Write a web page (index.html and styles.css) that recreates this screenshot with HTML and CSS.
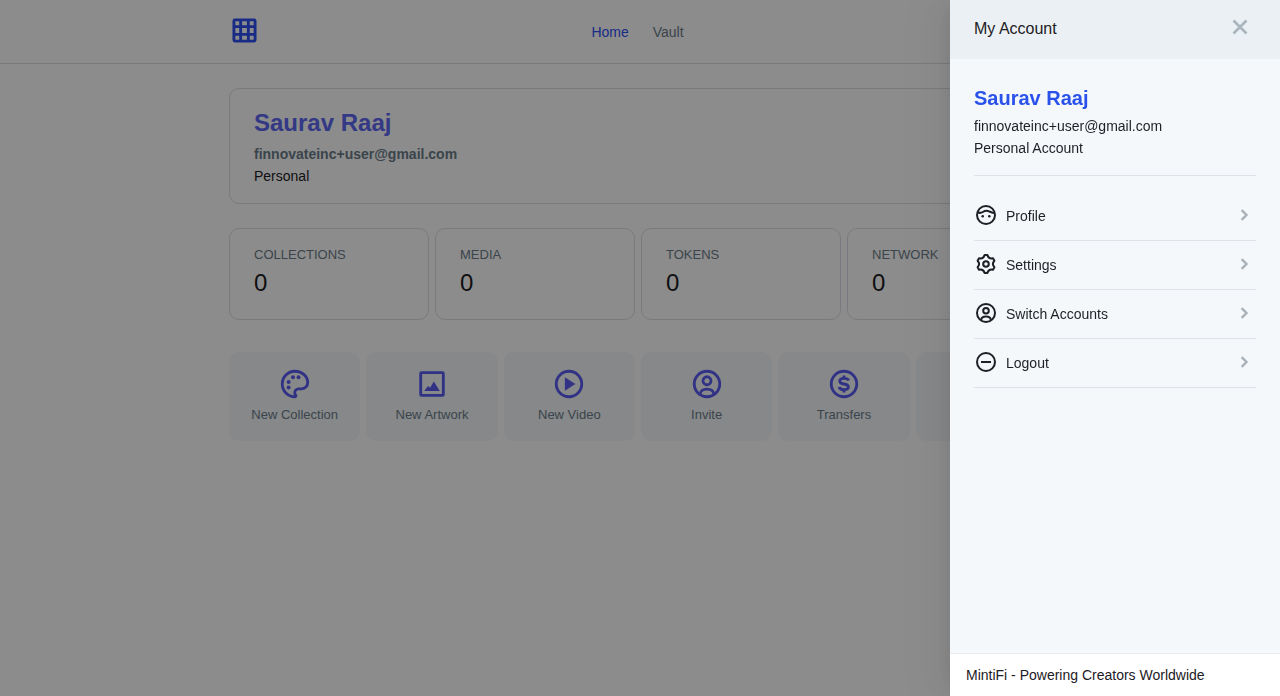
FILE: index.html
```html
<!DOCTYPE html>
<html lang="en">
<head>
<meta charset="utf-8">
<title>MintiFi</title>
<meta name="viewport" content="width=device-width, initial-scale=1">
<link rel="stylesheet" href="styles.css">
</head>
<body>
<svg class="defs" aria-hidden="true">
  <symbol id="user" viewBox="0 0 24 24">
    <g fill="none" stroke="currentColor" stroke-width="2"><circle cx="12" cy="12" r="9"/><circle cx="12" cy="9.700" r="2.800"/><path d="M7.200 19.200c0-2.300 2.100-3.600 4.800-3.600s4.800 1.300 4.800 3.600"/></g>
  </symbol>
  <symbol id="chevron" viewBox="0 0 24 24">
    <path d="M9.200 6.200l5.800 5.800-5.800 5.800" fill="none" stroke="currentColor" stroke-width="2.800"/>
  </symbol>
</svg>

<div class="page">
  <header class="topbar">
    <div class="container topbar-inner">
      <a href="#" class="logo" aria-label="MintiFi home">
        <svg viewBox="0 0 26 26"><path fill="currentColor" fill-rule="evenodd" d="M3 .5h20A2.500 2.500 0 0 1 25.500 3v20a2.500 2.500 0 0 1-2.500 2.500H3A2.500 2.500 0 0 1 .5 23V3A2.500 2.500 0 0 1 3 .5zM3.500 3.500v4h4v-4zM10.500 3.500v4h5v-4zM18.500 3.500v4h4v-4zM3.500 10.500v5h4v-5zM10.500 10.500v5h5v-5zM18.500 10.500v5h4v-5zM3.500 18.500v4h4v-4zM10.500 18.500v4h5v-4zM18.500 18.500v4h4v-4z"/></svg>
      </a>
      <nav class="nav"><a href="#" class="active">Home</a><a href="#">Vault</a></nav>
    </div>
  </header>

  <main class="container content">
    <section class="card profile">
      <h1>Saurav Raaj</h1>
      <p class="email">finnovateinc+user@gmail.com</p>
      <p>Personal</p>
    </section>

    <section class="stats">
      <div class="card stat"><h2>COLLECTIONS</h2><p>0</p></div>
      <div class="card stat"><h2>MEDIA</h2><p>0</p></div>
      <div class="card stat"><h2>TOKENS</h2><p>0</p></div>
      <div class="card stat"><h2>NETWORK</h2><p>0</p></div>
    </section>

    <section class="tiles">
      <button class="tile" type="button">
        <svg viewBox="0 0 24 24" fill="currentColor"><path d="M12 2c5.522 0 10 3.978 10 8.889a5.558 5.558 0 0 1-5.556 5.555h-1.966c-.922 0-1.667.745-1.667 1.667 0 .422.167.811.422 1.100.267.300.434.689.434 1.122C13.667 21.256 12.900 22 12 22 6.478 22 2 17.522 2 12S6.478 2 12 2zm-1.189 16.111a3.664 3.664 0 0 1 3.667-3.667h1.966A3.558 3.558 0 0 0 20 10.890C20 7.139 16.468 4 12 4a8 8 0 0 0-.676 15.972 3.648 3.648 0 0 1-.513-1.860z"/><circle cx="10.600" cy="7.300" r="1.400"/><circle cx="14.500" cy="7.300" r="1.400"/><circle cx="7.500" cy="10.600" r="1.400"/><circle cx="7.500" cy="14.400" r="1.400"/></svg>
        <span>New Collection</span>
      </button>
      <button class="tile" type="button">
        <svg viewBox="0 0 24 24" fill="currentColor"><rect x="4" y="4" width="16" height="16" rx="0.600" fill="none" stroke="currentColor" stroke-width="2"/><path d="M6.500 17l2.700-3.600 1.400 1.300 2.700-4.500L17.500 17z"/></svg>
        <span>New Artwork</span>
      </button>
      <button class="tile" type="button">
        <svg viewBox="0 0 24 24" fill="currentColor"><circle cx="12" cy="12" r="9" fill="none" stroke="currentColor" stroke-width="2"/><path d="M9.100 7.200v9.600l7.400-4.800z"/></svg>
        <span>New Video</span>
      </button>
      <button class="tile" type="button">
        <svg><use href="#user"/></svg>
        <span>Invite</span>
      </button>
      <button class="tile" type="button">
        <svg viewBox="0 0 24 24" fill="none" stroke="currentColor" stroke-width="2"><circle cx="12" cy="12" r="9"/><path d="M15.300 9.600C14.900 8.500 13.700 8 12 8c-1.900 0-3 .8-3 2 0 1.300 1.200 1.700 3 2s3.100.8 3.100 2.100c0 1.200-1.200 1.900-3.100 1.900-1.800 0-3.100-.6-3.500-1.900M12 6v2.200M12 15.800V18"/></svg>
        <span>Transfers</span>
      </button>
      <button class="tile" type="button" aria-label="More"></button>
    </section>
  </main>
</div>

<div class="backdrop"></div>

<aside class="drawer" role="dialog" aria-label="My Account">
  <header class="drawer-head">
    <h2>My Account</h2>
    <button class="close" type="button" aria-label="Close">
      <svg viewBox="0 0 16 16"><path d="M1.500 1.500l13 13M14.500 1.500l-13 13" fill="none" stroke="currentColor" stroke-width="2.600"/></svg>
    </button>
  </header>
  <div class="drawer-body">
    <div class="account">
      <h3>Saurav Raaj</h3>
      <p>finnovateinc+user@gmail.com</p>
      <p>Personal Account</p>
    </div>
    <ul class="menu">
      <li><a href="#">
        <svg viewBox="0 0 24 24" fill="currentColor"><g fill="none" stroke="currentColor" stroke-width="2"><circle cx="12" cy="12" r="9"/><path d="M3.200 8.900c1.800 1.300 3.800 1.200 5.600.1 1.900-1.200 4.100-1.500 6.200-.7 1.700.7 3.300 1.700 5.900 1.800"/></g><circle cx="8.700" cy="13.300" r="1.300"/><circle cx="15.300" cy="13.300" r="1.300"/></svg>
        <span>Profile</span><svg class="chevron"><use href="#chevron"/></svg></a></li>
      <li><a href="#">
        <svg viewBox="0 0 24 24" fill="none" stroke="currentColor" stroke-width="2" stroke-linejoin="round"><path d="M10.600 3.100h2.800Q14.700 7.300 19 6.300l1.400 2.500Q17.400 12 20.400 15.200L19 17.700Q14.700 16.700 13.400 20.900h-2.800Q9.300 16.700 5 17.700l-1.400-2.500Q6.600 12 3.600 8.800L5 6.300Q9.300 7.300 10.600 3.100z"/><circle cx="12" cy="12" r="2.800"/></svg>
        <span>Settings</span><svg class="chevron"><use href="#chevron"/></svg></a></li>
      <li><a href="#">
        <svg><use href="#user"/></svg>
        <span>Switch Accounts</span><svg class="chevron"><use href="#chevron"/></svg></a></li>
      <li><a href="#">
        <svg viewBox="0 0 24 24" fill="none" stroke="currentColor" stroke-width="2"><circle cx="12" cy="12" r="9"/><path d="M7 12h10"/></svg>
        <span>Logout</span><svg class="chevron"><use href="#chevron"/></svg></a></li>
    </ul>
  </div>
  <footer class="drawer-foot">MintiFi - Powering Creators Worldwide</footer>
</aside>
</body>
</html>
```
FILE: styles.css
```css
* {
  box-sizing: border-box;
}

body {
  margin: 0;
  background: #fff;
  color: #1d2024;
  font: 14px/22px "Liberation Sans", Helvetica, Arial, sans-serif;
}

h1, h2, h3, p, ul {
  margin: 0;
  padding: 0;
}

a {
  color: inherit;
  text-decoration: none;
}

button {
  border: 0;
  padding: 0;
  font: inherit;
  cursor: pointer;
}

svg {
  display: block;
}

.defs {
  display: none;
}

.page {
  min-height: 100vh;
}

.topbar {
  border-bottom: 1px solid #dcdfe3;
  padding-right: 5px;
}

.container {
  width: 100%;
  max-width: 818px;
  margin: 0 auto;
}

.topbar-inner {
  display: grid;
  grid-template-columns: 1fr auto 1fr;
  align-items: center;
  height: 63px;
}

.logo {
  color: #2d50f5;
  padding: 0 3px 2px;
}

.logo svg {
  width: 25px;
  height: 25px;
}

.nav {
  display: flex;
  gap: 24px;
  color: #6c7d8a;
}

.nav .active {
  color: #2d50f5;
}

.page .content {
  max-width: 822px;
  padding: 24px 4px 24px 0;
}

.card {
  border: 1px solid #dcdfe3;
  border-radius: 10px;
}

.profile {
  padding: 16px 24px;
}

.profile h1 {
  margin-bottom: 2px;
  color: #6068f5;
  font-size: 24px;
  line-height: 36px;
}

.email {
  color: #6c7d8a;
  font-weight: bold;
}

.stats {
  display: grid;
  grid-template-columns: repeat(4, 1fr);
  gap: 6px;
  margin-top: 24px;
}

.stat {
  padding: 15px 24px 19px;
}

.stat h2 {
  color: #6c7d8a;
  font-size: 13px;
  font-weight: normal;
  line-height: 22px;
}

.stat p {
  font-size: 24px;
  line-height: 34px;
}

.tiles {
  display: grid;
  grid-template-columns: repeat(6, 1fr);
  gap: 6px;
  margin-top: 32px;
}

.tile {
  display: flex;
  flex-direction: column;
  align-items: center;
  gap: 3px;
  padding: 15px 8px;
  border-radius: 10px;
  background: #f4f7fa;
  color: #6c7d8a;
  font-size: 13px;
}

.tile svg {
  width: 34px;
  height: 34px;
  color: #5a5cf2;
}

.backdrop {
  position: fixed;
  inset: 0;
  background: rgba(0, 0, 0, 0.45);
}

.drawer {
  position: fixed;
  top: 0;
  right: 0;
  bottom: 0;
  display: flex;
  flex-direction: column;
  width: 330px;
  max-width: 100%;
  background: #f4f8fb;
  box-shadow: -6px 0 16px -8px rgba(0, 0, 0, 0.08), -9px 0 28px rgba(0, 0, 0, 0.05), -12px 0 48px 16px rgba(0, 0, 0, 0.03);
}

.drawer-head {
  display: flex;
  align-items: center;
  justify-content: space-between;
  padding: 18px 32px 19px 24px;
  background: #eaf0f3;
}

.drawer-head h2 {
  font-size: 16px;
  font-weight: normal;
  line-height: 22px;
}

.close {
  padding-bottom: 4px;
  background: none;
  color: #a9b5bd;
}

.close svg {
  width: 16px;
  height: 16px;
}

.drawer-body {
  flex: 1;
  padding: 24px;
  overflow: auto;
}

.account {
  padding-bottom: 16px;
  border-bottom: 1px solid #dde3e8;
}

.account h3 {
  margin-bottom: 2px;
  color: #2a52ea;
  font-size: 20px;
  line-height: 30px;
}

.menu {
  margin-top: 16px;
  list-style: none;
}

.menu a {
  display: flex;
  align-items: center;
  gap: 8px;
  height: 49px;
  padding-bottom: 2px;
  border-bottom: 1px solid #dde3e8;
}

.menu span {
  flex: 1;
  padding-top: 2px;
}

.menu svg {
  width: 24px;
  height: 24px;
}

.menu .chevron {
  color: #a9b1b8;
  width: 24px;
  height: 20px;
}

.drawer-foot {
  padding: 10px 16px;
  border-top: 1px solid #e9edf0;
  background: #fff;
}
```
